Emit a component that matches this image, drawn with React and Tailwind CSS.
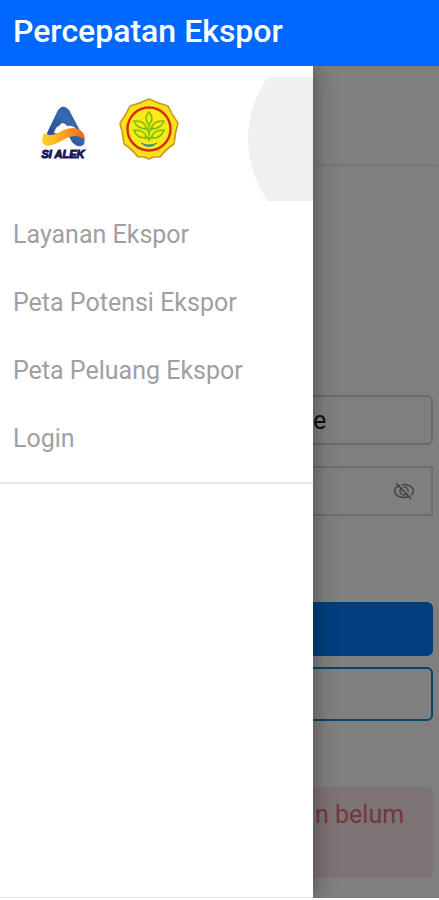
const menuItems = ["Layanan Ekspor", "Peta Potensi Ekspor", "Peta Peluang Ekspor", "Login"];

const SiAlekLogo = () => (
  <div className="flex flex-col items-center w-12">
    <svg viewBox="0 0 48 42" className="w-12 h-[42px]" aria-hidden="true">
      <defs>
        <linearGradient id="peak" x1="0" y1="1" x2="1" y2="0">
          <stop offset="0" stopColor="#1f478f" />
          <stop offset="0.6" stopColor="#3a69ad" />
          <stop offset="1" stopColor="#274f94" />
        </linearGradient>
        <linearGradient id="wave" x1="0" y1="0" x2="1" y2="0">
          <stop offset="0" stopColor="#ffd22a" />
          <stop offset="0.5" stopColor="#fba51f" />
          <stop offset="1" stopColor="#e8641c" />
        </linearGradient>
      </defs>
      <path d="M8 27 L19 4 Q24 -3 30 4 L45 32 Q47 39 42 40 Q37 41 33 36 L28 27 L9 32 Z" fill="url(#peak)" />
      <path d="M15 27 Q17 20 20 20 Q22 17 24 17 Q27 18 28 20 Q34 19 38 24 L26 29 Z" fill="#fff" />
      <path d="M5 27 Q10 31 19 27 Q31 20 39 23 Q46 26 46 34 Q38 27 28 32 Q19 37 13 39 Q4 42 3 34 Q3 30 5 27 Z" fill="url(#wave)" />
    </svg>
    <span className="font-['Liberation_Sans'] text-[11px] leading-3 font-bold italic whitespace-nowrap text-[#17165c] [-webkit-text-stroke:1px_#17165c]">SI ALEK</span>
  </div>
);

const MinistryLogo = () => (
  <svg viewBox="0 0 60 62" className="w-[60px] h-[62px]" role="img" aria-label="Kementerian Pertanian">
    <path
      d="M30 1 Q38 5 49 8 Q53 17 59 25 Q56 35 55 46 Q47 51 41 59 Q35 58 30 61 Q25 58 19 59 Q13 51 5 46 Q4 35 1 25 Q7 17 11 8 Q22 5 30 1 Z"
      fill="#fbe116"
      stroke="#c49a22"
      strokeWidth="1.6"
      strokeLinejoin="round"
    />
    <circle cx="30" cy="31" r="21.5" fill="#fbea13" stroke="#d62b13" strokeWidth="2.4" />
    <g fill="none" stroke="#74bf16" strokeWidth="1.5">
      <path d="M30 14 Q24 20 30 27 Q36 20 30 14 Z" />
      <path d="M30 26 V43" />
      <path d="M28 31 Q26 22 15 23 Q18 31 28 31 Z" />
      <path d="M32 31 Q34 22 45 23 Q42 31 32 31 Z" />
      <path d="M28 40 Q26 32 15 32 Q18 41 28 40 Z" />
      <path d="M32 40 Q34 32 45 32 Q42 41 32 40 Z" />
      <path d="M26 29 L30 35 L34 29 M26 38 L30 42 L34 38" strokeWidth="1.2" />
    </g>
    <path d="M22 45 Q30 49 38 45 Q30 52 22 45 Z" fill="#258f91" stroke="#258f91" strokeWidth="0.8" />
  </svg>
);

const EyeOff = () => (
  <svg viewBox="0 0 22 18" className="w-[22px] h-[18px]" fill="none" stroke="#858585" strokeWidth="1.5" aria-hidden="true">
    <ellipse cx="11" cy="9" rx="9.5" ry="6.5" />
    <circle cx="11" cy="9" r="4" />
    <path d="M5 0 L20 16" stroke="#fff" />
    <path d="M3 1 L18 17" />
  </svg>
);

const App = () => {
  return (
    <div className="flex min-h-screen flex-col bg-white font-[Roboto,sans-serif]">
      <header className="flex h-[66px] items-center bg-[#0068ff] px-[13px] pb-1">
        <h1 className="text-[32px] leading-9 font-medium text-white">Percepatan Ekspor</h1>
      </header>

      <div className="flex grow pb-0.5">
        {/* Drawer */}
        <aside className="z-10 flex w-[313px] shrink-0 flex-col border-b border-gray-200 bg-white shadow-[2px_0_20px_rgba(0,0,0,0.35)] [clip-path:inset(0_-40px_0_0)]">
          <div className="flex h-[135px] items-start pl-[39px]">
            <div className="pt-10">
              <SiAlekLogo />
            </div>
            <div className="pt-8 pl-8">
              <MinistryLogo />
            </div>
            <svg viewBox="0 0 65 124" className="mt-[11px] ml-auto h-[124px] w-[65px]" aria-hidden="true">
              <circle cx="106" cy="62" r="106" fill="#f0f0f0" />
            </svg>
          </div>
          <nav className="border-b-2 border-[#e6e6e6] pb-[9px]">
            {menuItems.map((item) => (
              <a key={item} href="#" className="flex h-[68px] items-center px-[13px] text-[25px] leading-8 text-[#a0a0a0]">
                {item}
              </a>
            ))}
          </nav>
        </aside>

        {/* Login page under the scrim */}
        <main className="relative min-w-0 grow bg-white">
          <div className="h-[98px] shadow-[0_1px_4px_rgba(0,0,0,0.12)]" />
          <form className="pt-[231px] pr-1.5">
            <input
              type="text"
              aria-label="Username"
              defaultValue="e"
              className="block h-[50px] w-full rounded-r-md border-2 border-l-0 border-[#d4d4d4] text-[25px] text-[#222]"
            />
            <div className="mt-[21px] flex h-[50px] items-center border-2 border-l-0 border-[#dcdcdc] pr-4">
              <input type="password" aria-label="Password" className="h-full min-w-0 grow" />
              <button type="button" aria-label="Show password">
                <EyeOff />
              </button>
            </div>
            <button type="submit" aria-label="Login" className="mt-[86px] block h-[54px] w-full rounded-r-md bg-[#007cfc]" />
            <button type="button" aria-label="Register" className="mt-[11px] block h-[54px] w-full rounded-r-md border-2 border-l-0 border-[#1088d8]" />
            <p className="mt-[66px] h-[91px] rounded-r-md bg-[#fbe6e8] pt-3 pl-0.5 text-[25px] leading-8 whitespace-nowrap text-[#e0707c]">n belum</p>
          </form>
          <div className="pointer-events-none absolute inset-0 bg-black/50" />
        </main>
      </div>
    </div>
  );
};

export default App;
